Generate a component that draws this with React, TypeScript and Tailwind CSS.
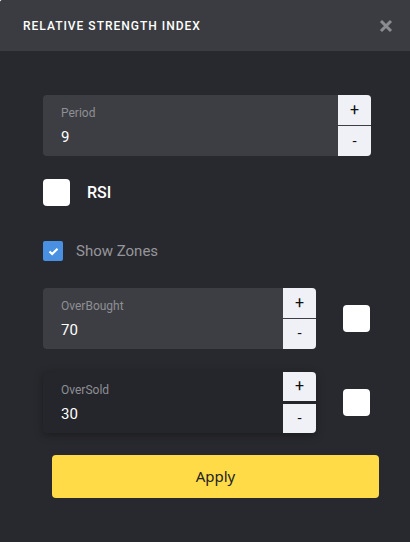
import React from 'react';

function Stepper({ label, value, width, dark }: { label: string; value: string; width: string; dark?: boolean }) {
  return (
    <div
      className={`flex h-[61px] rounded-[4px] ${width} ${
        dark ? 'bg-[#25262b] shadow-[0_2px_8px_rgba(0,0,0,0.35)]' : 'bg-[#3d3e43]'
      }`}
    >
      <div className="flex-1 pl-[18px] pt-[10px]">
        <div className="text-[12px] leading-[16px] text-[#8e8f94]">{label}</div>
        <div className="mt-[6px] text-[15px] leading-[20px] text-white">{value}</div>
      </div>
      <div className={`flex w-[33px] flex-col ${dark ? 'gap-[3px]' : 'gap-px bg-[#3d3e43]'} overflow-hidden rounded-r-[4px]`}>
        <button className="flex flex-1 items-center justify-center bg-[#eff1f6] text-[16px] leading-none text-[#111]">+</button>
        <button className="flex flex-1 items-center justify-center bg-[#eff1f6] text-[15px] leading-none text-[#111]">-</button>
      </div>
    </div>
  );
}

export default function App() {
  return (
    <div
      className="h-[542px] w-[410px] overflow-hidden rounded-tl-[3px] bg-[#28292e]"
      style={{ fontFamily: 'Roboto, "Noto Sans", sans-serif' }}
    >
      {/* Header */}
      <div className="flex h-[51px] items-center justify-between bg-[#3b3c41] pl-[23px] pr-[17px]">
        <h1 className="text-[12px] font-medium tracking-[1px] text-white">RELATIVE STRENGTH INDEX</h1>
        <svg width="14" height="14" viewBox="0 0 14 14" className="text-[#8b8c91]">
          <path d="M2 2 L12 12 M12 2 L2 12" stroke="currentColor" strokeWidth="3" strokeLinecap="butt" />
        </svg>
      </div>

      <div className="pl-[43px]">
        <div className="pt-[44px]">
          <Stepper label="Period" value="9" width="w-[328px]" />
        </div>

        {/* RSI */}
        <div className="mt-[23px] flex items-center gap-[17px]">
          <div className="h-[27px] w-[27px] rounded-[4px] bg-white" />
          <span className="text-[16px] font-medium text-white">RSI</span>
        </div>

        {/* Show Zones */}
        <div className="mt-[34px] flex items-center gap-[13px]">
          <div className="flex h-[20px] w-[20px] items-center justify-center rounded-[2px] bg-[#4a90e2]">
            <svg width="11" height="9" viewBox="0 0 11 9">
              <path d="M1.5 4.5 L4.2 7 L9.5 1.8" fill="none" stroke="white" strokeWidth="2.2" />
            </svg>
          </div>
          <span className="text-[15px] text-[#95969b]">Show Zones</span>
        </div>

        {/* OverBought */}
        <div className="mt-[25px] flex items-center gap-[27px]">
          <Stepper label="OverBought" value="70" width="w-[273px]" />
          <div className="h-[27px] w-[27px] rounded-[4px] bg-white" />
        </div>

        {/* OverSold */}
        <div className="mt-[23px] flex items-center gap-[27px]">
          <Stepper label="OverSold" value="30" width="w-[273px]" dark />
          <div className="h-[27px] w-[27px] rounded-[4px] bg-white" />
        </div>

        <div className="mt-[22px] pl-[9px]">
          <button
            className="h-[43px] w-[327px] rounded-[4px] bg-[#ffdc47] text-[15px] text-[#222]"
            style={{ fontFamily: '"Noto Sans", sans-serif' }}
          >
            Apply
          </button>
        </div>
      </div>
    </div>
  );
}
